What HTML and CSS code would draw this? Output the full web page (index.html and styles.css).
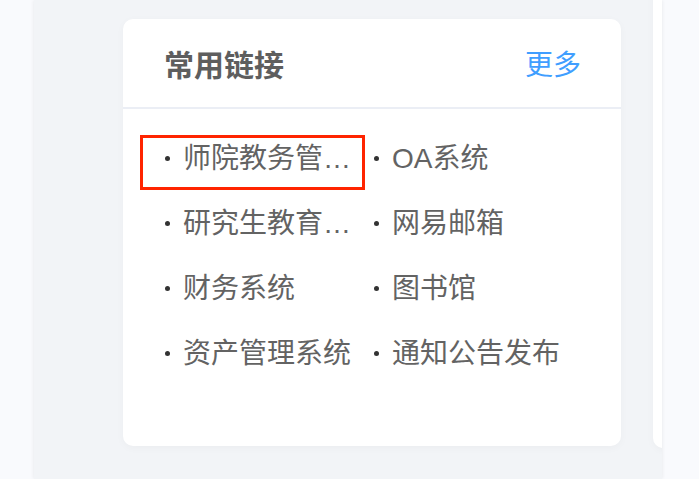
FILE: index.html
```html
<!DOCTYPE html>
<html lang="zh-CN">
<head>
    <meta charset="UTF-8">
    <meta name="viewport" content="width=device-width, initial-scale=1.0">
    <title>常用链接</title>

    <link rel="stylesheet" href="styles.css">
</head>
<body>

    <div class="panel">

        <div class="card">
            <div class="card-head">
                <span class="card-title">常用链接</span>
                <a class="more">更多</a>
            </div>

            <ul class="links">
                <li><span class="link-text">师院教务管理系统</span></li>
                <li><span class="link-text">OA系统</span></li>
                <li><span class="link-text">研究生教育管理系统</span></li>
                <li><span class="link-text">网易邮箱</span></li>
                <li><span class="link-text">财务系统</span></li>
                <li><span class="link-text">图书馆</span></li>
                <li><span class="link-text">资产管理系统</span></li>
                <li><span class="link-text">通知公告发布</span></li>
            </ul>

            <div class="picked"></div>
        </div>

        <div class="card card-next"></div>

    </div>

</body>
</html>
```

FILE: styles.css
```css
body{
    margin: 0;
    background: #f9fafd;
    font-family: "Liberation Sans", "Noto Sans CJK SC", sans-serif;
    overflow: hidden;
}

.panel{
    display: flex;
    gap: 32px;
    margin-left: 34px;
    width: 628px;
    height: 100vh;
    padding: 19px 0 0 89px;
    box-sizing: border-box;
    background: #f2f4f7;
    box-shadow: 0 0 4px rgba(0, 0, 0, 0.08);
    overflow: hidden;
}

.card{
    position: relative;
    flex: none;
    width: 498px;
    height: 427px;
    background: #ffffff;
    border-radius: 10px;
    box-shadow: 0 2px 8px rgba(0, 0, 0, 0.03);
}

.card-next{
    margin-top: -60px;
    height: 489px;
}

.card-head{
    display: flex;
    justify-content: space-between;
    align-items: center;
    height: 88px;
    padding: 0 40px 0 41px;
    border-bottom: 2px solid #ebeef5;
}

.card-title{
    font-size: 30px;
    font-weight: bold;
    color: #5e5e5e;
}

.more{
    font-size: 28px;
    color: #409eff;
}

.links{
    display: grid;
    grid-template-columns: 209px 209px;
    margin: 0;
    padding: 17px 0 0 42px;
    list-style: none;
}

.links li{
    display: flex;
    align-items: center;
    height: 65px;
    font-size: 28px;
    color: #636363;
}

.links li::before{
    content: "";
    flex: none;
    width: 5px;
    height: 5px;
    margin-right: 13px;
    border-radius: 50%;
    background: #333333;
}

.link-text{
    max-width: 170px;
    white-space: nowrap;
    overflow: hidden;
    text-overflow: ellipsis;
    line-height: 65px;
}

.picked{
    position: absolute;
    left: 17px;
    top: 116px;
    width: 225px;
    height: 55px;
    box-sizing: border-box;
    border: 3px solid #ff2400;
}
```
